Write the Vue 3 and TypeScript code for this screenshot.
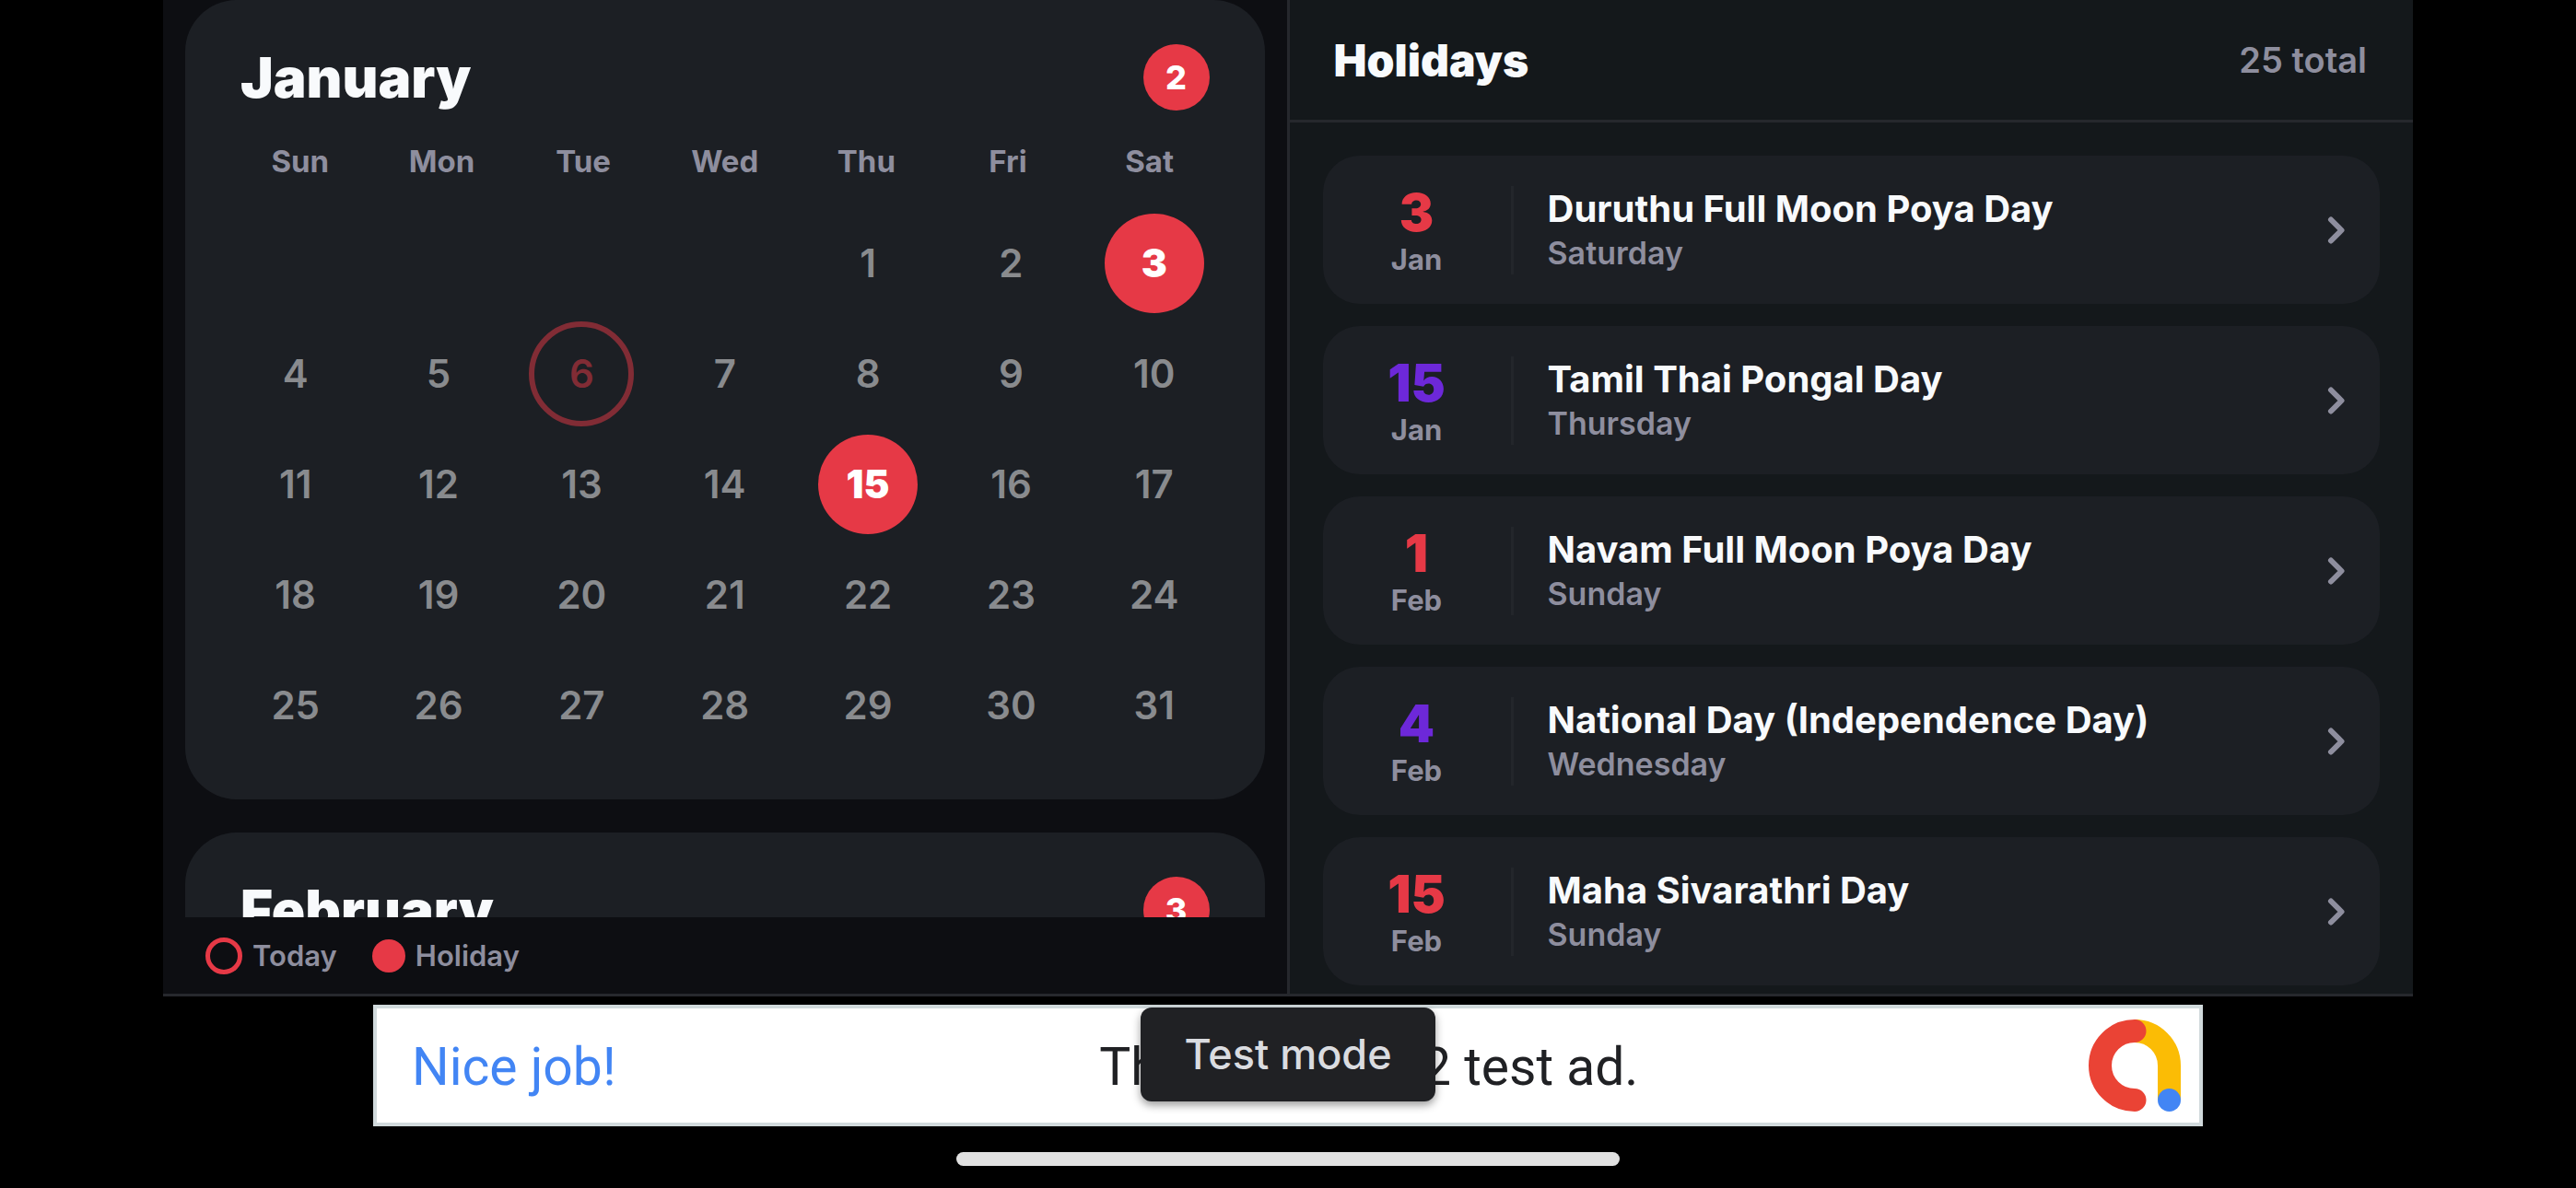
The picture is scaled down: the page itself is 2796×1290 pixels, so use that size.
<script setup lang="ts">
interface Month {
  name: string
  offset: number
  days: number
  holidays: number[]
  today?: number
  loaded: boolean
}

interface Holiday {
  day: number
  month: string
  title: string
  weekday: string
  kind: 'public' | 'special'
}

const weekdays = ['Sun', 'Mon', 'Tue', 'Wed', 'Thu', 'Fri', 'Sat']

const months: Month[] = [
  { name: 'January', offset: 4, days: 31, holidays: [3, 15], today: 6, loaded: true },
  { name: 'February', offset: 0, days: 28, holidays: [1, 4, 15], loaded: false },
]

const holidays: Holiday[] = [
  { day: 3, month: 'Jan', title: 'Duruthu Full Moon Poya Day', weekday: 'Saturday', kind: 'public' },
  { day: 15, month: 'Jan', title: 'Tamil Thai Pongal Day', weekday: 'Thursday', kind: 'special' },
  { day: 1, month: 'Feb', title: 'Navam Full Moon Poya Day', weekday: 'Sunday', kind: 'public' },
  { day: 4, month: 'Feb', title: 'National Day (Independence Day)', weekday: 'Wednesday', kind: 'special' },
  { day: 15, month: 'Feb', title: 'Maha Sivarathri Day', weekday: 'Sunday', kind: 'public' },
]

function weeksOf(month: Month): (number | null)[][] {
  const cells: (number | null)[] = []
  for (let i = 0; i < month.offset; i++) cells.push(null)
  for (let d = 1; d <= month.days; d++) cells.push(d)
  while (cells.length % 7) cells.push(null)
  const weeks: (number | null)[][] = []
  for (let i = 0; i < cells.length; i += 7) weeks.push(cells.slice(i, i + 7))
  return weeks
}
</script>

<template>
  <div class="screen">
    <main class="panes">
      <section class="calendar">
        <div class="months">
          <article v-for="m in months" :key="m.name" class="month">
            <header class="month-head">
              <h2 class="month-name">{{ m.name }}</h2>
              <span class="badge">{{ m.holidays.length }}</span>
            </header>
            <table v-if="m.loaded" class="grid">
              <thead>
                <tr class="week-names">
                  <th v-for="w in weekdays" :key="w" scope="col">{{ w }}</th>
                </tr>
              </thead>
              <tbody>
                <tr v-for="(week, i) in weeksOf(m)" :key="i" class="week">
                  <td v-for="(d, j) in week" :key="j">
                    <span
                      v-if="d"
                      class="day"
                      :class="{ holiday: m.holidays.includes(d), today: m.today === d }"
                    >{{ d }}</span>
                  </td>
                </tr>
              </tbody>
            </table>
          </article>
        </div>
        <footer class="legend">
          <span class="legend-item"><i class="mark ring"></i>Today</span>
          <span class="legend-item"><i class="mark dot"></i>Holiday</span>
        </footer>
      </section>

      <section class="holidays">
        <header class="list-head">
          <h1 class="list-title">Holidays</h1>
          <span class="total">25 total</span>
        </header>
        <ul class="list">
          <li v-for="h in holidays" :key="h.title">
            <button type="button" class="item">
              <span class="date">
                <span class="date-day" :class="h.kind">{{ h.day }}</span>
                <span class="date-month">{{ h.month }}</span>
              </span>
              <span class="rule"></span>
              <span class="info">
                <span class="info-title">{{ h.title }}</span>
                <span class="info-day">{{ h.weekday }}</span>
              </span>
              <svg class="chevron" viewBox="0 0 20 32" aria-hidden="true">
                <path d="M4 4.500 L15.500 16 L4 27.500" />
              </svg>
            </button>
          </li>
        </ul>
      </section>
    </main>

    <aside class="ad">
      <a href="#" class="ad-link">
        <span class="ad-cta">Nice job!</span>
        <span class="ad-text">This is a 320x2 test ad.</span>
        <svg class="ad-logo" viewBox="0 0 100 100" aria-hidden="true">
          <path d="M50 12.500 A37.500 37.500 0 0 1 87.500 50 V87" fill="none" stroke="#fbbc05" stroke-width="25" />
          <path d="M50 12.500 A37.500 37.500 0 0 0 50 87.500" fill="none" stroke="#ea4335" stroke-width="25" stroke-linecap="round" />
          <circle cx="87.500" cy="87.500" r="12.500" fill="#4285f4" />
        </svg>
      </a>
      <span class="ad-tag">Test mode</span>
    </aside>

    <div class="home-bar"></div>
  </div>
</template>

<style>
body {
  margin: 0;
  background: #000;
}
</style>

<style scoped>
.screen {
  display: flex;
  flex-direction: column;
  align-items: center;
  box-sizing: border-box;
  height: 100vh;
  padding: 0 177px 24px;
  background: #000;
  color: #f8fafc;
  font-family: Inter, 'Liberation Sans', sans-serif;
}

.panes {
  display: flex;
  flex: 1;
  min-height: 0;
  width: 100%;
  border-bottom: 3px solid #26282d;
}

.calendar {
  display: flex;
  flex-direction: column;
  flex: 1;
  min-width: 0;
  background: #0d0e12;
}

.months {
  display: flex;
  flex-direction: column;
  gap: 36px;
  flex: 1;
  min-height: 0;
  padding: 0 24px;
  overflow-y: auto;
  scrollbar-width: none;
}

.month {
  flex: none;
  padding: 48px 42px 42px;
  border-radius: 56px;
  background: #1c1f24;
}

.month-head {
  display: flex;
  align-items: center;
  justify-content: space-between;
  margin-bottom: 36px;
  padding: 0 18px;
}

.month-name {
  margin: 0;
  font-size: 60px;
  line-height: 72px;
  font-weight: 900;
}

.badge {
  width: 72px;
  border-radius: 36px;
  background: #e63946;
  color: #fff;
  font-size: 36px;
  line-height: 72px;
  font-weight: 800;
  text-align: center;
}

.grid,
.grid thead,
.grid tbody {
  display: block;
}

.week-names,
.week {
  display: grid;
  grid-template-columns: repeat(7, 1fr);
}

.week-names {
  padding: 0 6px 32px;
}

.week-names th {
  padding: 0;
  color: #8e8e9e;
  font-size: 33px;
  line-height: 38px;
  font-weight: 700;
}

.week td {
  display: flex;
  align-items: center;
  justify-content: center;
  height: 120px;
  padding: 0;
}

.day {
  box-sizing: border-box;
  width: 108px;
  border-radius: 54px;
  color: #898b8e;
  font-size: 42px;
  line-height: 108px;
  font-weight: 600;
  text-align: center;
}

.day.holiday {
  background: #e63946;
  color: #fff;
  font-weight: 900;
}

.day.today {
  width: 114px;
  border: 6px solid #812c35;
  border-radius: 57px;
  color: #812c35;
  line-height: 102px;
}

.legend {
  display: flex;
  align-items: center;
  gap: 38px;
  height: 83px;
  padding: 0 46px;
  color: #8e8e9e;
  font-size: 31px;
  font-weight: 600;
}

.legend-item {
  display: flex;
  align-items: center;
  gap: 11px;
}

.mark {
  box-sizing: border-box;
  border-radius: 50%;
}

.ring {
  width: 40px;
  height: 40px;
  border: 5px solid #e63946;
}

.dot {
  width: 36px;
  height: 36px;
  background: #e63946;
}

.holidays {
  display: flex;
  flex-direction: column;
  flex: 1;
  min-width: 0;
  border-left: 3px solid #26282d;
  background: #14181b;
}

.list-head {
  display: flex;
  align-items: center;
  justify-content: space-between;
  height: 130px;
  padding: 0 50px 0 48px;
  border-bottom: 3px solid #26282d;
}

.list-title {
  margin: 0;
  font-size: 48px;
  font-weight: 900;
}

.total {
  color: #8e8e9e;
  font-size: 38px;
  font-weight: 600;
}

.list {
  display: flex;
  flex-direction: column;
  gap: 24px;
  flex: 1;
  min-height: 0;
  margin: 0;
  padding: 36px 36px 0;
  overflow-y: auto;
  scrollbar-width: none;
  list-style: none;
}

.item {
  display: flex;
  align-items: center;
  width: 100%;
  height: 161px;
  padding: 0 37px 0 36px;
  border: 0;
  border-radius: 40px;
  background: #1c1f24;
  color: inherit;
  font-family: inherit;
  text-align: left;
}

.date {
  display: flex;
  flex-direction: column;
  align-items: center;
  width: 132px;
}

.date-day {
  font-size: 56px;
  line-height: 64px;
  font-weight: 900;
}

.date-day.public {
  color: #e63946;
}

.date-day.special {
  color: #6d28d9;
}

.date-month {
  color: #8e8e9e;
  font-size: 31px;
  line-height: 38px;
  font-weight: 700;
}

.rule {
  width: 3px;
  height: 96px;
  margin: 0 37px 0 36px;
  background: #23262b;
}

.info {
  display: flex;
  flex-direction: column;
  flex: 1;
  padding-top: 2px;
}

.info-title {
  font-size: 40px;
  line-height: 48px;
  font-weight: 700;
}

.info-day {
  color: #8e8e9e;
  font-size: 34px;
  line-height: 48px;
  font-weight: 600;
}

.chevron {
  width: 20px;
  height: 32px;
  fill: none;
  stroke: #8e8e9e;
  stroke-width: 6;
  stroke-linecap: round;
  stroke-linejoin: round;
}

.ad {
  position: relative;
  width: 100%;
  max-width: 1986px;
  margin: 9px 0 28px;
}

.ad-link {
  display: flex;
  align-items: center;
  justify-content: space-between;
  box-sizing: border-box;
  height: 132px;
  padding: 0 20px 0 38px;
  border: 4px solid #d1dadc;
  background: #fff;
  color: #202124;
  font-family: Roboto, 'Liberation Sans', sans-serif;
  font-size: 57px;
  line-height: 68px;
  text-decoration: none;
}

.ad-cta,
.ad-text {
  padding-top: 3px;
}

.ad-cta {
  color: #4285f4;
}

.ad-text {
  padding-left: 36px;
}

.ad-logo {
  width: 100px;
  height: 100px;
}

.ad-tag {
  position: absolute;
  top: 3px;
  left: 50%;
  width: 320px;
  margin-left: -160px;
  border-radius: 12px;
  background: #202124;
  box-shadow: 0 4px 10px rgba(0, 0, 0, 0.4);
  color: #dadce0;
  font-size: 45px;
  line-height: 102px;
  font-weight: 500;
  text-align: center;
}

.home-bar {
  width: 720px;
  max-width: 100%;
  height: 15px;
  border-radius: 8px;
  background: #e1e1e1;
}
</style>
